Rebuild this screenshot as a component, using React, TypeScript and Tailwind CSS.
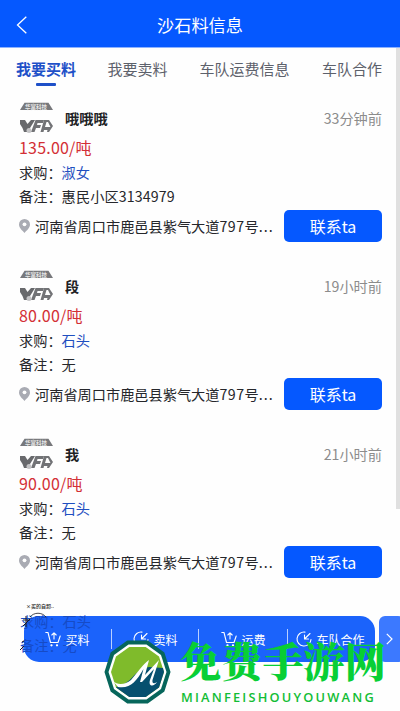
import React from "react";

type Item = { name: string; time: string; price: string; want: string; note: string };

const items: Item[] = [
  { name: "哦哦哦", time: "33分钟前", price: "135.00/吨", want: "淑女", note: "惠民小区3134979" },
  { name: "段", time: "19小时前", price: "80.00/吨", want: "石头", note: "无" },
  { name: "我", time: "21小时前", price: "90.00/吨", want: "石头", note: "无" },
];

function Avatar() {
  return (
    <svg className="h-[32px] w-[34px] shrink-0" viewBox="0 0 34 32">
      <path d="M5.500 .8H29.500L34 8H1Z" fill="#77787b" />
      <text x="6" y="6.500" fontSize="5.500" fontWeight="700" fill="#e8e8e8" textLength="22">华富科技</text>
      <path d="M1 18H6L8.500 22L12 18H16L11 26L8 30H5L3.500 26L1 22Z" fill="#68696c" />
      <path d="M16.500 18H25L24 21H18.500L18 23H22L21 26H17L15.500 30H12Z" fill="#727376" />
      <path fillRule="evenodd" d="M25 18H30L34 24L30 30H28L28.500 28H25L24.500 30H21.500ZM27.500 20L26 25H31.500L29 20Z" fill="#727376" />
      <circle cx="10" cy="28.500" r="2.500" fill="#c3c3c5" />
    </svg>
  );
}

function Pin() {
  return (
    <svg className="mr-[5px] h-[14px] w-[11px] shrink-0" viewBox="0 0 11 14">
      <path d="M5.500 0A5.500 5.500 0 0 1 11 5.500C11 9 7.500 11.500 5.500 14C3.500 11.500 0 9 0 5.500A5.500 5.500 0 0 1 5.500 0Z" fill="#a9abb3" />
      <circle cx="5.500" cy="5.300" r="1.9" fill="#fff" />
    </svg>
  );
}

function Card({ item }: { item: Item }) {
  return (
    <section className="flex h-[168px] flex-col pt-[11px] pr-[18px] pl-[19px] text-[14.2px] text-[#26272b]">
      <div className="flex h-[34px] items-center">
        <Avatar />
        <b className="ml-[12px] pt-px text-[14.2px] font-bold text-[#202124]">{item.name}</b>
        <span className="ml-auto pt-px text-[14.2px] text-[#8c8c8c]">{item.time}</span>
      </div>
      <div className="h-[25px] text-[16px] leading-[25px] tracking-[0.2px] text-[#d32f35]">{item.price}</div>
      <div className="h-6 leading-6">求购：<span className="text-[#1f4fc0]">{item.want}</span></div>
      <div className="h-6 leading-6">备注：<span className="tracking-[0.12px]">{item.note}</span></div>
      <div className="flex h-[36px] items-center">
        <Pin />
        <span className="pt-px whitespace-nowrap">
          河南省周口市鹿邑县紫气大道<span className="tracking-[0.5px]">797</span>号<span className="tracking-[1px]">...</span>
        </span>
        <button className="ml-auto h-8 w-[98px] shrink-0 rounded-[5px] bg-[#0558ff] text-[16px] leading-8 text-white">联系ta</button>
      </div>
    </section>
  );
}

function Cart() {
  return (
    <svg className="h-4 w-4 shrink-0" viewBox="0 0 16 16" fill="none" stroke="#fff" strokeWidth="1.1" strokeLinecap="round" strokeLinejoin="round">
      <path d="M.8 1.500H3L5.500 11.500H13L15.200 5M9 8V2M6.800 4L9 1.800L11.200 4" />
      <circle cx="6.500" cy="14.300" r=".6" fill="#fff" />
      <circle cx="12" cy="14.300" r=".6" fill="#fff" />
    </svg>
  );
}

function Dial() {
  return (
    <svg className="h-4 w-4 shrink-0" viewBox="0 0 16 16" fill="none" stroke="#fff" strokeWidth="1.1" strokeLinecap="round" strokeLinejoin="round">
      <path d="M9 1.100A7 7 0 1 0 15 8.500M14 2.500L8.500 8M8.500 4V8H12.500" />
    </svg>
  );
}

function Emblem() {
  return (
    <svg className="absolute top-[639px] left-[104px] h-[66px] w-[67px]" viewBox="0 0 67 66">
      <g transform="translate(33.5 33)" strokeLinejoin="round">
        <polygon points="32,0 26,19 10,30.500 -10,30.500 -26,19 -32,0 -26,-19 -10,-30.500 10,-30.500 26,-19" fill="#07665b" stroke="#07665b" strokeWidth="2" />
        <polygon points="29,0 23.500,17 9,27.500 -9,27.500 -23.500,17 -29,0 -23.500,-17 -9,-27.500 9,-27.500 23.500,-17" fill="#fff" />
        <polygon points="26.500,0 21.500,15.500 8.200,25 -8.200,25 -21.500,15.500 -26.500,0 -21.500,-15.500 -8.200,-25 8.200,-25 21.500,-15.500" fill="#7fbb2b" />
      </g>
      <path d="M14 47C28 45 29 31 45 28L59 29L60 33L55 48.500L41.700 58H25.300L12 48.500Z" fill="#07506f" />
      <path d="M9 42C13 46 21 46 27 41C34 33 39 25 45 21L41 36L55 21L48.500 41C48 45 50 45 53 43C50 48 44 48 46 41L50 30L38 43L36 43L39.500 30C32 43 26 50 14 48Z" fill="#fff" />
    </svg>
  );
}

const actions = [
  { label: "买料", icon: <Cart />, pad: "w-[88px] pl-[21px]" },
  { label: "卖料", icon: <Dial />, pad: "w-[87px] pl-[21px]" },
  { label: "运费", icon: <Cart />, pad: "w-[89px] pl-[22px]" },
  { label: "车队合作", icon: <Dial />, pad: "w-[87px] pl-[8px]" },
];

export default function App() {
  return (
    <main lang="zh-CN" className="relative h-[711px] w-[400px] overflow-hidden bg-[#fefefe] font-['Noto_Sans_CJK_SC',sans-serif]">
      <header className="grid h-[48px] grid-cols-[100px_200px_100px] items-center border-b border-[#8db2ff] bg-[#0558ff] pt-[2px] text-white">
        <svg className="ml-[16px] h-[18px] w-[11px]" viewBox="0 0 11 18" fill="none" stroke="#fff" strokeWidth="1.3"><path d="M10.300.7L1.500 9L10.300 17.300" /></svg>
        <h1 className="text-center text-[17.2px] leading-6">沙石料信息</h1>
      </header>
      <nav className="flex h-[42px] pt-[9px] pl-[16px] text-[15px] leading-[24px] whitespace-nowrap text-[#5d616b]">
        <div className="w-[91.5px] font-bold text-[#1e50c8]">
          我要买料
          <i className="mt-[2px] ml-[20px] block h-[3px] w-[20px] rounded-[1px] bg-[#1e50c8]" />
        </div>
        <div className="w-[92px]">我要卖料</div>
        <div className="w-[122.5px]">车队运费信息</div>
        <div>车队合作</div>
      </nav>
      {items.map((item) => <Card key={item.name} item={item} />)}
      <div className="absolute top-[48px] right-0 h-[461px] w-[4px] bg-[#e0e0e0]" />

      <div className="absolute top-[600px] left-[26px] text-[5px] leading-3 font-medium whitespace-nowrap text-[#222]">×买的自卸..</div>
      <div className="absolute top-[616px] left-[24px] flex h-[46px] w-[351px] items-center rounded-[15px] bg-[#1b63fb]">
        <div className="absolute top-[-7px] left-[-4px] text-[14.2px] leading-6 text-[#164bc6]">
          <div>求购：石头</div>
          <div>备注：无</div>
        </div>
        {actions.map((a, i) => (
          <div key={a.label} className={`relative flex h-[20px] items-center gap-[4.5px] text-[12px] whitespace-nowrap text-white ${a.pad} ${i < 3 ? "border-r border-[#b9d0ff]" : ""}`}>
            {a.icon}
            <span className="pt-px">{a.label}</span>
          </div>
        ))}
      </div>
      <svg className="absolute top-[612px] left-[20px] h-[42px] w-[32px]" viewBox="0 0 32 42" fill="none" stroke="#1a1a22" strokeWidth="1">
        <path d="M10 5C14 0 22 0 26 5" strokeWidth=".8" />
        <path d="M3 8h7M6 4v11M3 14l7-7M0 38l4-4M2 30l2-1" />
      </svg>
      <div className="absolute top-[616px] left-[379px] grid h-[46px] w-[25px] place-items-center rounded-[6px] bg-[#3c79ff] pr-[5px]">
        <svg className="h-[12px] w-[7px]" viewBox="0 0 7 12" fill="none" stroke="#fff" strokeWidth="1.2"><path d="M.8.8L6 6L.8 11.200" /></svg>
      </div>
      <Emblem />
      <div className="absolute top-[635px] left-[180px] text-[41.2px] leading-[50px] font-black whitespace-nowrap text-[#08cf35] font-['Noto_Serif_CJK_SC','Noto_Sans_CJK_SC',serif]">免费手游网</div>
      <div className="absolute top-[688px] left-[181px] text-[12.8px] leading-[18px] font-semibold tracking-[2.2px] whitespace-nowrap text-[#12bd35] font-['Open_Sans',sans-serif]">MIANFEISHOUYOUWANG</div>
    </main>
  );
}
